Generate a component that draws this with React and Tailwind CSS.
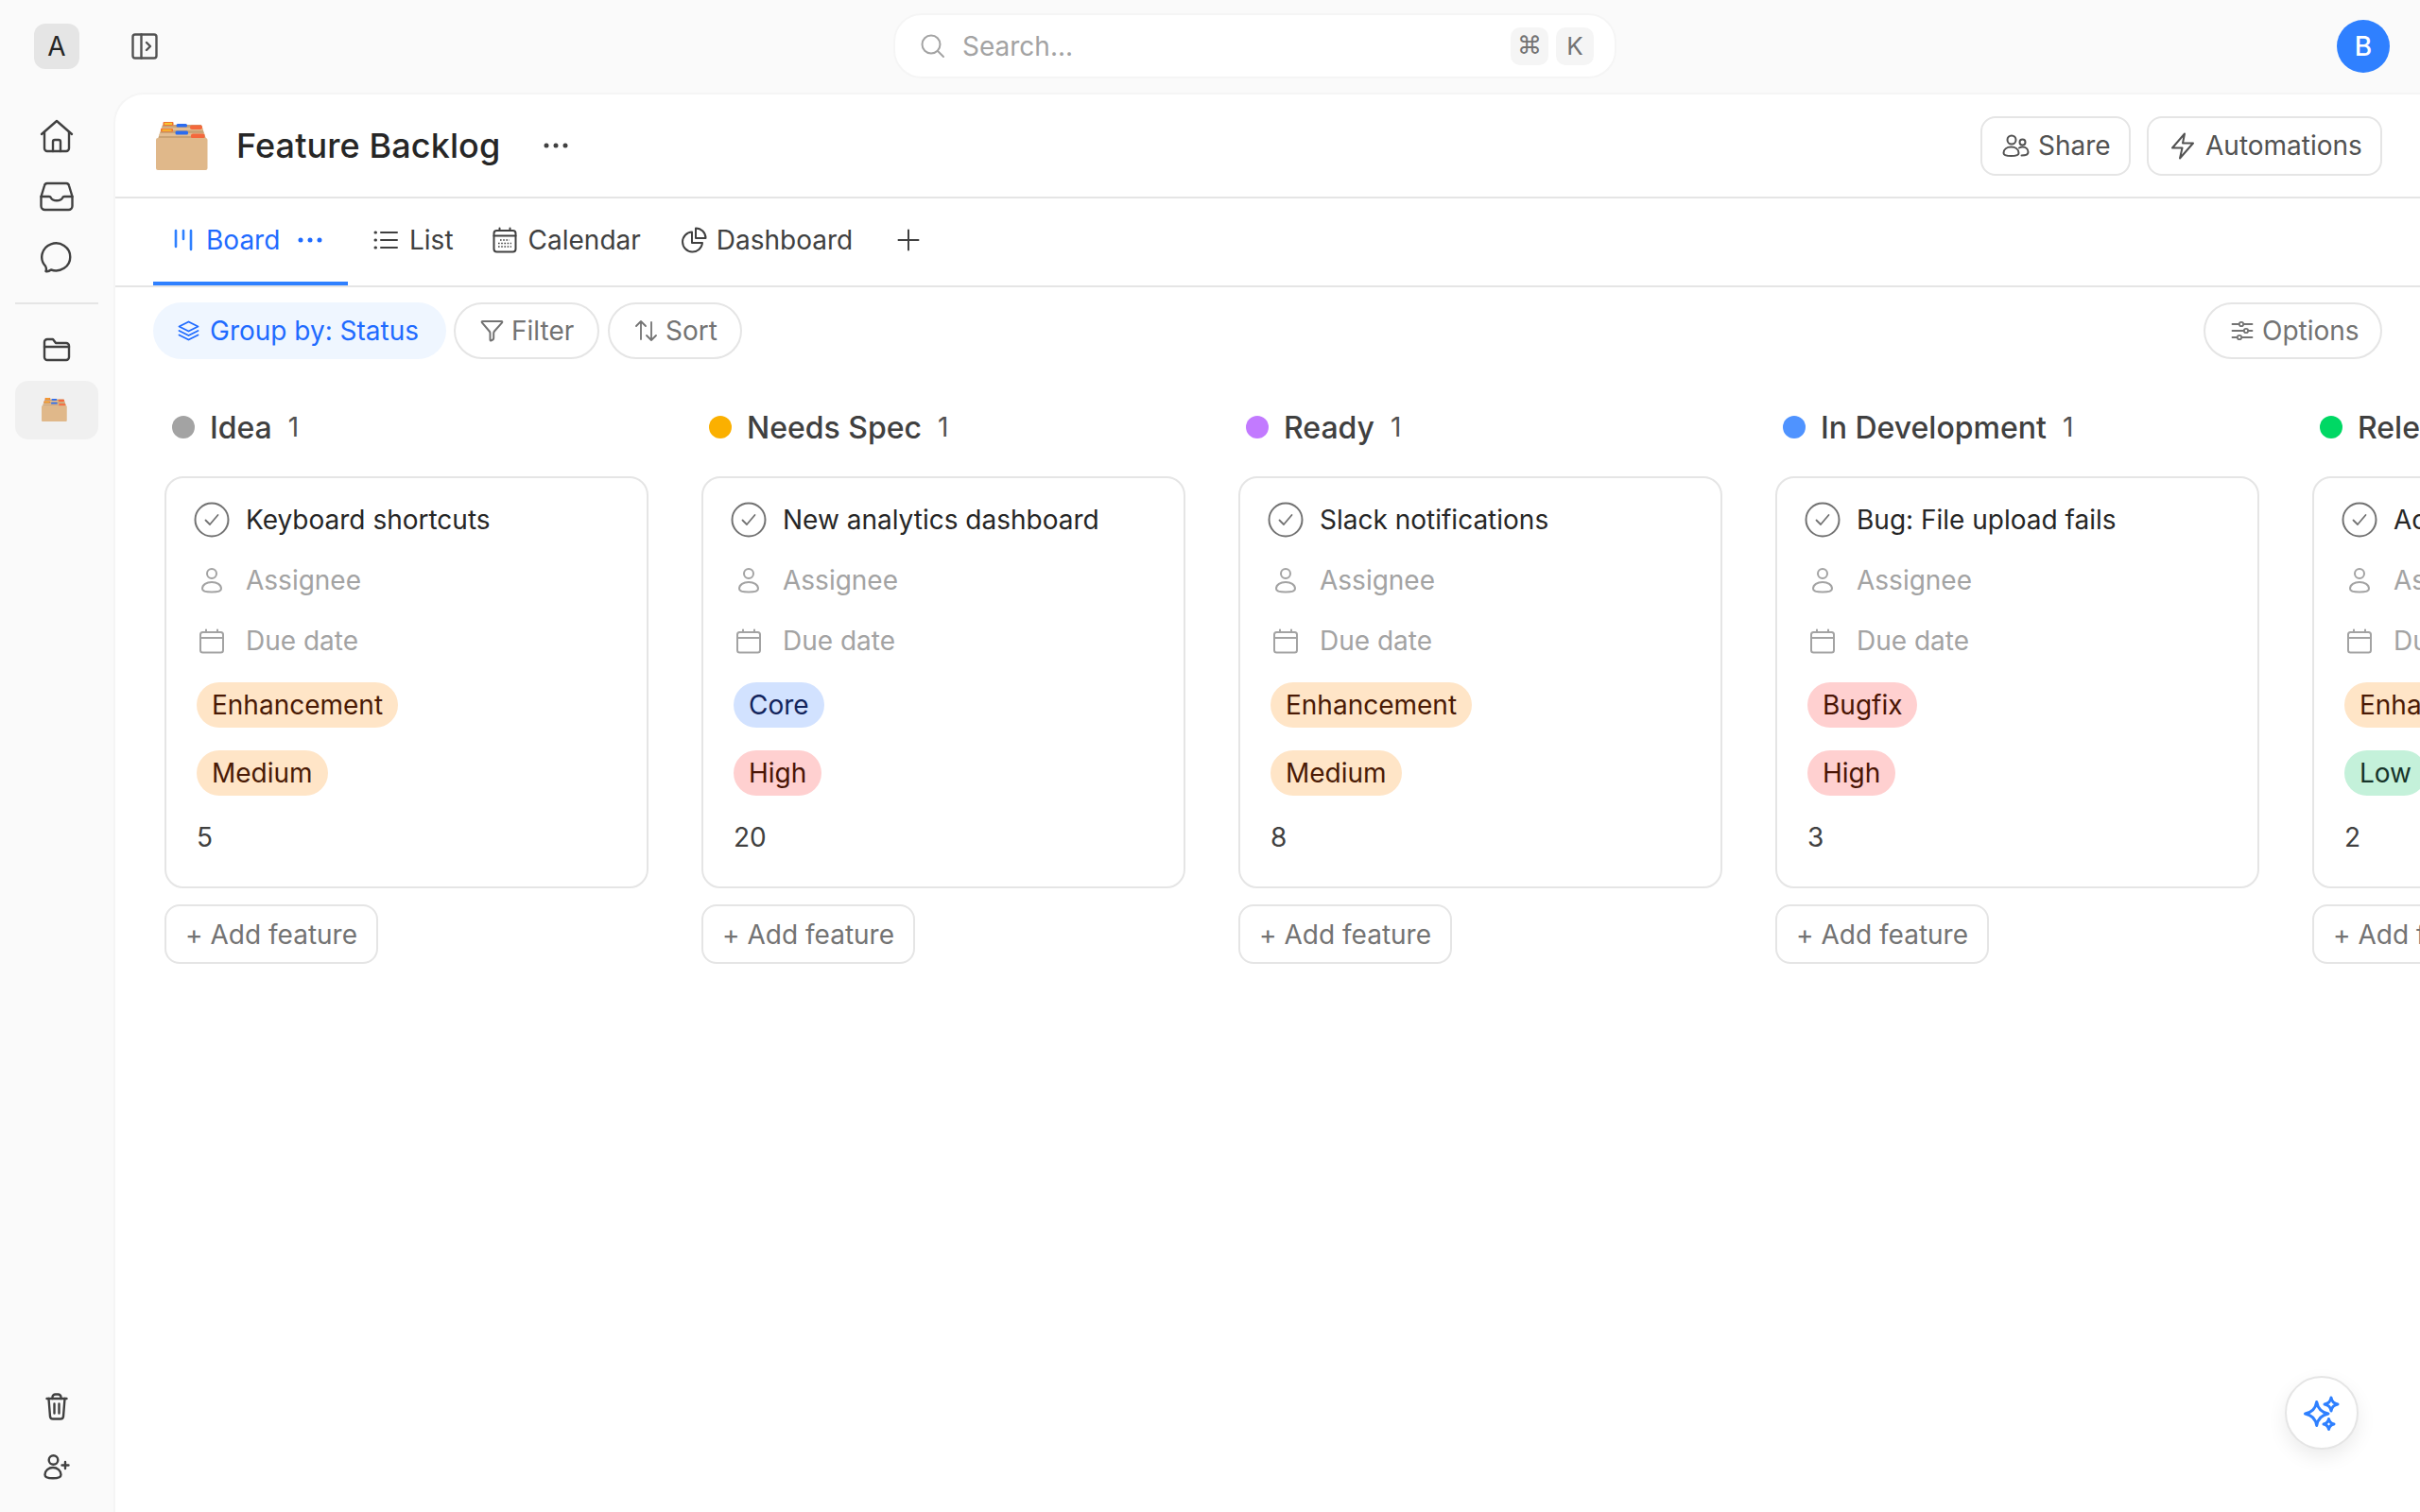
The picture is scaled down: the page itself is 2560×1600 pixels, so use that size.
const font = { fontFamily: 'Inter, "Liberation Sans", sans-serif' };

function Svg({ w, h, color = '#404040', sw = 2.4, className = '', children }) {
  return (
    <svg
      width={w}
      height={h}
      viewBox={`0 0 ${w} ${h}`}
      fill="none"
      stroke={color}
      strokeWidth={sw}
      strokeLinecap="round"
      strokeLinejoin="round"
      className={`shrink-0 ${className}`}
    >
      {children}
    </svg>
  );
}

function Dots({ color }) {
  return (
    <svg width="26" height="6" viewBox="0 0 26 6" fill={color} className="shrink-0">
      <circle cx="3" cy="3" r="2.5" />
      <circle cx="13" cy="3" r="2.5" />
      <circle cx="23" cy="3" r="2.5" />
    </svg>
  );
}

// card file box emoji, drawn small and big
function BoxEmoji({ w = 55, h = 51 }) {
  return (
    <svg width={w} height={h} viewBox="0 0 55 51" className="shrink-0">
      <path d="M7 3h41l5 15H2z" fill="#c9a376" />
      <path d="M6 6h43l1 3H5zM4 12h47l1 3H3z" fill="#e2bd92" />
      <rect x="7.5" y="0" width="11" height="4" rx="1" fill="#f0722f" />
      <rect x="9" y="1" width="8" height="2" fill="#f7c530" />
      <rect x="21.5" y="2" width="11.5" height="3.5" rx="1.5" fill="#2a6cf0" />
      <rect x="36" y="3.5" width="13" height="4.5" rx="2" fill="#f4683c" />
      <rect x="5" y="7" width="13" height="3.5" rx="1" fill="#f0722f" />
      <rect x="6.5" y="8" width="10" height="1.6" fill="#f7c530" />
      <rect x="20.5" y="9.5" width="13.5" height="4" rx="1.5" fill="#2a6cf0" />
      <rect x="37" y="12.5" width="14.5" height="5" rx="2" fill="#f4683c" />
      <rect x="0" y="17" width="54.5" height="34" rx="2" fill="#e0b88a" />
    </svg>
  );
}

function HomeIcon() {
  return (
    <Svg w={36} h={36}>
      <path d="M2 16 18 2l16 14" />
      <path d="M5 14v17a3 3 0 0 0 3 3h20a3 3 0 0 0 3-3V14" />
      <path d="M14 34V24a2 2 0 0 1 2-2h4a2 2 0 0 1 2 2v10" />
    </Svg>
  );
}

function InboxIcon() {
  return (
    <Svg w={36} h={32}>
      <path d="M8 2h20a3 3 0 0 1 3 2.500L34.500 16v10a4 4 0 0 1-4 4h-25a4 4 0 0 1-4-4V16L5 4.500A3 3 0 0 1 8 2z" />
      <path d="M1.500 16H10c1 0 1.600.6 2 1.500.9 1.800 2.800 2.800 6 2.800s5.100-1 6-2.800c.4-.9 1-1.500 2-1.500h8.500" />
    </Svg>
  );
}

function ChatIcon() {
  return (
    <Svg w={34} h={33}>
      <path d="M5 25.500A15 14.500 0 1 1 11 29.500C9 31 7 31.500 5.500 31c.7-1.800.5-3.800-.5-5.500z" />
    </Svg>
  );
}

function FolderIcon() {
  return (
    <Svg w={30} h={26}>
      <path d="M2 5a3 3 0 0 1 3-3h6l3 4h11a3 3 0 0 1 3 3v12a3 3 0 0 1-3 3H5a3 3 0 0 1-3-3z" />
      <path d="M2 10h26" />
    </Svg>
  );
}

function TrashIcon() {
  return (
    <Svg w={24} h={29}>
      <path d="M1.500 6h21" />
      <path d="M7.500 6V4.500a3 3 0 0 1 3-3h3a3 3 0 0 1 3 3V6" />
      <path d="M3.500 6l1.500 19a3 3 0 0 0 3 2.500h8a3 3 0 0 0 3-2.500L20.500 6" />
      <path d="M9.500 11.500v10M14.500 11.500v10" />
    </Svg>
  );
}

function UserPlusIcon() {
  return (
    <Svg w={28} h={27}>
      <circle cx="10.500" cy="6" r="4.800" />
      <path d="M1.500 21.500C1.500 17 5.500 14 10 14s8.500 3 8.500 7.500c0 2.700-4 3.800-8.500 3.800s-8.500-1.100-8.500-3.800z" />
      <path d="M19.500 11.500h7M23 8v7" />
    </Svg>
  );
}

function CheckCircle() {
  return (
    <Svg w={38} h={38} color="#737373" sw={2}>
      <circle cx="19" cy="19" r="17.500" />
      <path d="M12.500 19.500l4.500 4.500 8.500-10" strokeWidth={1.800} />
    </Svg>
  );
}

function PersonIcon() {
  return (
    <Svg w={24} h={28} color="#a3a3a3" sw={2}>
      <circle cx="12" cy="7" r="5" />
      <path d="M2 23c0-4.500 4.500-7 10-7s10 2.500 10 7c0 2.500-3 3.500-10 3.500S2 25.500 2 23z" />
    </Svg>
  );
}

function EmptyCalendar() {
  return (
    <Svg w={28} h={27} color="#a3a3a3" sw={2}>
      <rect x="2" y="4" width="24" height="21.500" rx="2.500" />
      <path d="M2 10h24M8 1.500V4M20 1.500V4" />
    </Svg>
  );
}

const btnBase = 'flex items-center border-2 border-[#e5e5e5] text-[28px]';

function HeaderBar() {
  return (
    <div className="h-[110px] shrink-0 border-b-2 border-[#e5e5e5] flex items-center pl-[43px] pr-[40px]">
      <BoxEmoji />
      <h1 className="ml-[30px] text-[36px] font-medium text-[#262626] leading-none tracking-[0.1px]">Feature Backlog</h1>
      <div className="ml-[46px]"><Dots color="#404040" /></div>
      <div className="ml-auto flex items-center gap-[17px]">
        <button className={`${btnBase} h-[63px] w-[159px] pl-[21px] gap-[9px] rounded-[16px] text-[#525252]`}>
          <Svg w={29} h={25} color="#525252" sw={2}>
            <circle cx="10" cy="6" r="4.500" />
            <circle cx="21.500" cy="8.500" r="3" />
            <path d="M1.500 20c0-4 3.500-6.500 8-6.500s8 2.500 8 6.500c0 2-3.500 3-8 3s-8-1-8-3z" />
            <path d="M18 14.500c1-.6 2.300-1 3.500-1 3.300 0 6 2 6 5.500 0 2.500-3 3.500-7 3.500" />
          </Svg>
          Share
        </button>
        <button className={`${btnBase} h-[63px] w-[249px] pl-[23px] gap-[11px] rounded-[16px] text-[#525252]`}>
          <Svg w={26} h={29} color="#525252" sw={2}>
            <path d="M15 1.500 2 16.500h10.500L10 27.500l14-16H13z" />
          </Svg>
          Automations
        </button>
      </div>
    </div>
  );
}

function TabBar() {
  return (
    <div className="h-[94px] shrink-0 border-b-2 border-[#e5e5e5] flex items-stretch pl-[40px] text-[28px] text-[#404040]">
      <div className="relative w-[206px] flex items-center pl-[22px] pb-[4px] text-[#1f6bff]">
        <Svg w={20} h={24} color="#2f80ff" sw={2.6}>
          <path d="M2 2v17M10 2v9M18 2v20" />
        </Svg>
        <span className="ml-[14px]">Board</span>
        <div className="ml-[19px]"><Dots color="#1f6bff" /></div>
        <div className="absolute left-0 right-0 bottom-0 h-[4px] bg-[#2f80ff]" />
      </div>
      <div className="ml-[27px] flex items-center gap-[12px] pb-[4px]">
        <Svg w={26} h={22} sw={2}>
          <path d="M8 3h17M8 11h17M8 19h17" />
          <path d="M2 3h.5M2 11h.5M2 19h.5" strokeWidth={3} />
        </Svg>
        List
      </div>
      <div className="ml-[41px] flex items-center gap-[12px] pb-[4px]">
        <Svg w={26} h={28} sw={2}>
          <rect x="1.500" y="4" width="23" height="22.500" rx="3" />
          <path d="M1.500 9.500h23M7.500 1.500V4M18.500 1.500V4" />
          <path d="M8 14h10M6 17.500h14M6 21h14" strokeDasharray="1.600 1.600" strokeLinecap="butt" strokeWidth={1.500} />
        </Svg>
        Calendar
      </div>
      <div className="ml-[43px] flex items-center gap-[10px] pb-[4px]">
        <Svg w={27} h={28} sw={2}>
          <path d="M11 5.500A10.500 10.500 0 1 0 22 17H11z" />
          <path d="M15 1.500a10.500 10.500 0 0 1 10.500 10.500H15z" />
        </Svg>
        Dashboard
      </div>
      <div className="ml-[47px] flex items-center pb-[4px]">
        <Svg w={24} h={24} sw={2}>
          <path d="M12 1.500v21M1.500 12h21" />
        </Svg>
      </div>
    </div>
  );
}

function Toolbar() {
  return (
    <div className="shrink-0 flex items-center pt-[16px] pl-[40px] pr-[40px] text-[28px] text-[#737373]">
      <button className="h-[60px] w-[310px] pl-[26px] gap-[11px] flex items-center rounded-full bg-[#eff6ff] text-[#1f6bff]">
        <Svg w={23} h={22} color="#1f6bff" sw={1.800}>
          <path d="M11.500 1.500 21.500 6.500l-10 5-10-5z" />
          <path d="M1.500 11l10 5 10-5M1.500 15.500l10 5 10-5" />
        </Svg>
        Group by: Status
      </button>
      <button className={`${btnBase} ml-[8px] h-[60px] w-[154px] pl-[26px] gap-[8px] rounded-full`}>
        <Svg w={25} h={24} color="#737373" sw={2}>
          <path d="M2.500 2h20c.8 0 1 .8.600 1.300L15 12.500c-.5.6-.8 1.300-.8 2V20c0 .8-.4 1.200-1 1.500l-1.500.800c-.7.3-1.200 0-1.200-.8v-7c0-.7-.3-1.400-.8-2L1.900 3.300C1.500 2.800 1.700 2 2.500 2z" />
        </Svg>
        Filter
      </button>
      <button className={`${btnBase} ml-[9px] h-[60px] w-[142px] pl-[26px] gap-[8px] rounded-full`}>
        <Svg w={25} h={24} color="#737373" sw={1.800}>
          <path d="M7 21V2M2 7l5-5 5 5" />
          <path d="M18 3v19M13 17l5 5 5-5" />
        </Svg>
        Sort
      </button>
      <button className={`${btnBase} ml-auto h-[60px] w-[189px] pl-[27px] gap-[9px] rounded-full`}>
        <Svg w={24} h={22} color="#737373" sw={1.800}>
          <path d="M1.500 4h7M13.500 4h9M1.500 11h12M18.500 11h4M1.500 18h5M11.500 18h11" />
          <circle cx="11" cy="4" r="2.200" />
          <circle cx="16" cy="11" r="2.200" />
          <circle cx="9" cy="18" r="2.200" />
        </Svg>
        Options
      </button>
    </div>
  );
}

const pillStyles = {
  Enhancement: 'bg-[#ffe5c7] text-[#4a1a05]',
  Medium: 'bg-[#ffe5c7] text-[#4a1a05]',
  Core: 'bg-[#d2e2ff] text-[#12245c]',
  High: 'bg-[#ffd0d0] text-[#4a1505]',
  Bugfix: 'bg-[#ffd0d0] text-[#4a1505]',
  Low: 'bg-[#c4f1da] text-[#17342a]',
};

function Pill({ label }) {
  return (
    <span className={`ml-[4px] self-start h-[48px] flex items-center pl-[16px] pr-[16px] rounded-full text-[28px] ${pillStyles[label]}`}>
      {label}
    </span>
  );
}

function Row({ icon, children, className = '' }) {
  return (
    <div className={`h-[64px] flex items-center ${className}`}>
      <div className="w-[40px] flex justify-center shrink-0">{icon}</div>
      <div className="ml-[16px] text-[28px] whitespace-nowrap">{children}</div>
    </div>
  );
}

function Column({ dot, name, task, tags, points }) {
  return (
    <div className="w-[512px] shrink-0">
      <div className="h-[48px] flex items-center pl-[8px]">
        <span className={`w-[24px] h-[24px] rounded-full ${dot}`} />
        <span className="ml-[16px] pt-[1px] text-[32px] font-medium text-[#404040]">{name}</span>
        <span className="ml-[17px] text-[28px] text-[#525252]">1</span>
      </div>
      <div className="mt-[28px] h-[436px] border-2 border-[#e5e5e5] rounded-[20px] pt-[12px] pl-[28px] flex flex-col">
        <Row icon={<CheckCircle />} className="text-[#262626]">{task}</Row>
        <Row icon={<PersonIcon />} className="text-[#a3a3a3]">Assignee</Row>
        <Row icon={<EmptyCalendar />} className="text-[#a3a3a3]">Due date</Row>
        <div className="mt-[12px] flex flex-col gap-[24px]">
          {tags.map((t) => <Pill key={t} label={t} />)}
        </div>
        <div className="mt-[20px] ml-[4px] h-[48px] flex items-center text-[28px] text-[#404040]">{points}</div>
      </div>
      <button className={`${btnBase} mt-[17px] h-[63px] w-[226px] pl-[20px] gap-[8px] rounded-[16px] text-[#737373]`}>
        <span>+</span>
        <span>Add feature</span>
      </button>
    </div>
  );
}

const columns = [
  { dot: 'bg-[#a3a3a3]', name: 'Idea', task: 'Keyboard shortcuts', tags: ['Enhancement', 'Medium'], points: 5 },
  { dot: 'bg-[#fbb000]', name: 'Needs Spec', task: 'New analytics dashboard', tags: ['Core', 'High'], points: 20 },
  { dot: 'bg-[#c27aff]', name: 'Ready', task: 'Slack notifications', tags: ['Enhancement', 'Medium'], points: 8 },
  { dot: 'bg-[#4f93ff]', name: 'In Development', task: 'Bug: File upload fails', tags: ['Bugfix', 'High'], points: 3 },
  { dot: 'bg-[#00d864]', name: 'Released', task: 'Activity log', tags: ['Enhancement', 'Low'], points: 2 },
];

function Sidebar() {
  const item = 'h-[64px] w-full flex items-center justify-center';
  return (
    <aside className="w-[120px] shrink-0 flex flex-col items-center pt-[14px] pb-[16px]">
      <div className={item}><HomeIcon /></div>
      <div className={item}><InboxIcon /></div>
      <div className={item}><ChatIcon /></div>
      <div className="mt-[16px] h-[2px] w-[88px] bg-[#e5e5e5]" />
      <div className={`${item} mt-[16px]`}><FolderIcon /></div>
      <div className="mt-[1px] h-[62px] w-[88px] rounded-[14px] bg-[#f0f0f0] flex items-center justify-center pr-[5px] pb-[2px]">
        <BoxEmoji w={27} h={25} />
      </div>
      <div className={`${item} mt-auto`}><TrashIcon /></div>
      <div className={item}><UserPlusIcon /></div>
    </aside>
  );
}

function TopBar() {
  return (
    <div className="h-[98px] shrink-0 flex items-center pl-[36px] pr-[32px]">
      <div className="w-[48px] h-[48px] rounded-[12px] bg-[#e5e5e5] flex items-center justify-center text-[28px] text-[#262626]">A</div>
      <div className="ml-[55px]">
        <Svg w={28} h={28} color="#525252" sw={2.400}>
          <rect x="1.500" y="1.500" width="25" height="25" rx="2.500" />
          <path d="M10.500 1.500v25M16 10l4 4-4 4" />
        </Svg>
      </div>
      <div className="ml-[778px] -mt-[1px] w-[765px] h-[69px] rounded-[30px] bg-white border-2 border-[#f5f5f5] flex items-center pl-[26px] pr-[22px]">
        <Svg w={28} h={26} color="#a3a3a3" sw={2}>
          <circle cx="12" cy="11" r="9.500" />
          <path d="M19 18l6 6" />
        </Svg>
        <span className="ml-[17px] text-[28px] text-[#a3a3a3]">Search...</span>
        <span className="ml-auto w-[40px] h-[40px] rounded-[10px] bg-[#f5f5f5] flex items-center justify-center text-[26px] text-[#737373]" style={{ fontFamily: '"DejaVu Sans", sans-serif' }}>⌘</span>
        <span className="ml-[8px] w-[40px] h-[40px] rounded-[10px] bg-[#f5f5f5] flex items-center justify-center text-[26px] text-[#737373]">K</span>
      </div>
      <div className="ml-auto w-[56px] h-[56px] rounded-full bg-[#2f80ff] flex items-center justify-center text-[28px] font-medium text-white">B</div>
    </div>
  );
}

export default function App() {
  return (
    <div className="w-screen h-screen overflow-hidden bg-[#fafafa] flex flex-col" style={font}>
      <TopBar />
      <div className="flex-1 min-h-0 flex">
        <Sidebar />
        <main className="relative flex-1 min-w-0 bg-white rounded-tl-[32px] border-t-2 border-l-2 border-[#f5f5f5] flex flex-col overflow-hidden">
          <HeaderBar />
          <TabBar />
          <Toolbar />
          <div className="flex gap-[56px] pl-[52px] pt-[48px]">
            {columns.map((c) => <Column key={c.name} {...c} />)}
          </div>
          <button className="absolute right-[65px] bottom-[66px] w-[78px] h-[78px] rounded-full bg-white border-2 border-[#e5e5e5] shadow-[0_8px_20px_rgba(0,0,0,0.08)] flex items-center justify-center">
            <Svg w={44} h={44} color="#2f80ff" sw={3}>
              <path d="M16.700 10.500Q18.500 21 29 23 18.500 25 16.700 35.500 15 25 4.500 23 15 21 16.700 10.500z" />
              <path d="M32 6Q33 12 39 13 33 14 32 20 31 14 25 13 31 12 32 6z" />
              <path d="M29.500 28.500Q30.300 33 35 34 30.300 35 29.500 39.500 28.700 35 24 34 28.700 33 29.500 28.500z" />
            </Svg>
          </button>
        </main>
      </div>
    </div>
  );
}
